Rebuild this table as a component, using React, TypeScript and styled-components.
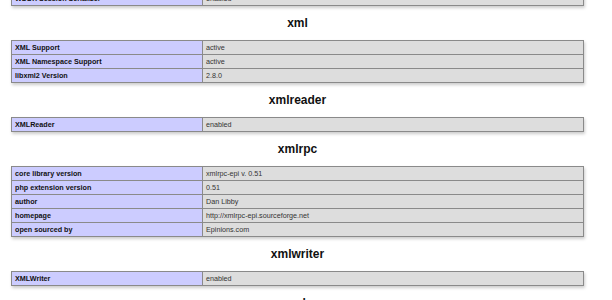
import React from "react";
import styled, { createGlobalStyle } from "styled-components";

const Global = createGlobalStyle`
  html, body { margin: 0; padding: 0; background: #fff; overflow: hidden; }
  body { font-family: "Liberation Sans", Arial, sans-serif; color: #222; }
`;

const Page = styled.div`
  width: 612px;
  height: 300px;
  overflow: hidden;
`;

const Center = styled.div`
  width: 573px;
  margin: -9px 0 0 11px;
`;

const Heading = styled.h2`
  margin: 10px 0 10px;
  height: 14px;
  line-height: 14px;
  font-size: 12px;
  font-weight: bold;
  text-align: center;
  color: #111;
`;

const Table = styled.table`
  width: 573px;
  border-collapse: separate;
  border-spacing: 0;
  border-top: 1px solid #8a8a8a;
  border-left: 1px solid #8a8a8a;
  box-shadow: 1px 2px 3px #ccc;
  table-layout: fixed;
`;

const Cell = styled.td<{ $label?: boolean }>`
  border-right: 1px solid #8a8a8a;
  border-bottom: 1px solid #8a8a8a;
  height: 13px;
  padding: 0 3px;
  line-height: 13px;
  font-size: 7.2px;
  vertical-align: middle;
  white-space: nowrap;
  overflow: hidden;
  background: ${(p) => (p.$label ? "#ccccff" : "#dddddd")};
  font-weight: ${(p) => (p.$label ? "bold" : "normal")};
  color: ${(p) => (p.$label ? "#111" : "#333")};
  width: ${(p) => (p.$label ? "184px" : "auto")};
`;

type Section = { title?: string; rows: [string, string][] };

const sections: Section[] = [
  { rows: [["WDDX Session Serializer", "enabled"]] },
  {
    title: "xml",
    rows: [
      ["XML Support", "active"],
      ["XML Namespace Support", "active"],
      ["libxml2 Version", "2.8.0"],
    ],
  },
  { title: "xmlreader", rows: [["XMLReader", "enabled"]] },
  {
    title: "xmlrpc",
    rows: [
      ["core library version", "xmlrpc-epi v. 0.51"],
      ["php extension version", "0.51"],
      ["author", "Dan Libby"],
      ["homepage", "http://xmlrpc-epi.sourceforge.net"],
      ["open sourced by", "Epinions.com"],
    ],
  },
  { title: "xmlwriter", rows: [["XMLWriter", "enabled"]] },
  { title: "xsl", rows: [["XSL", "enabled"]] },
];

export default function App() {
  return (
    <Page>
      <Global />
      <Center>
        {sections.map((s, i) => (
          <React.Fragment key={i}>
            {s.title && <Heading>{s.title}</Heading>}
            <Table>
              <tbody>
                {s.rows.map(([k, v]) => (
                  <tr key={k}>
                    <Cell $label>{k}</Cell>
                    <Cell>{v}</Cell>
                  </tr>
                ))}
              </tbody>
            </Table>
          </React.Fragment>
        ))}
      </Center>
    </Page>
  );
}
